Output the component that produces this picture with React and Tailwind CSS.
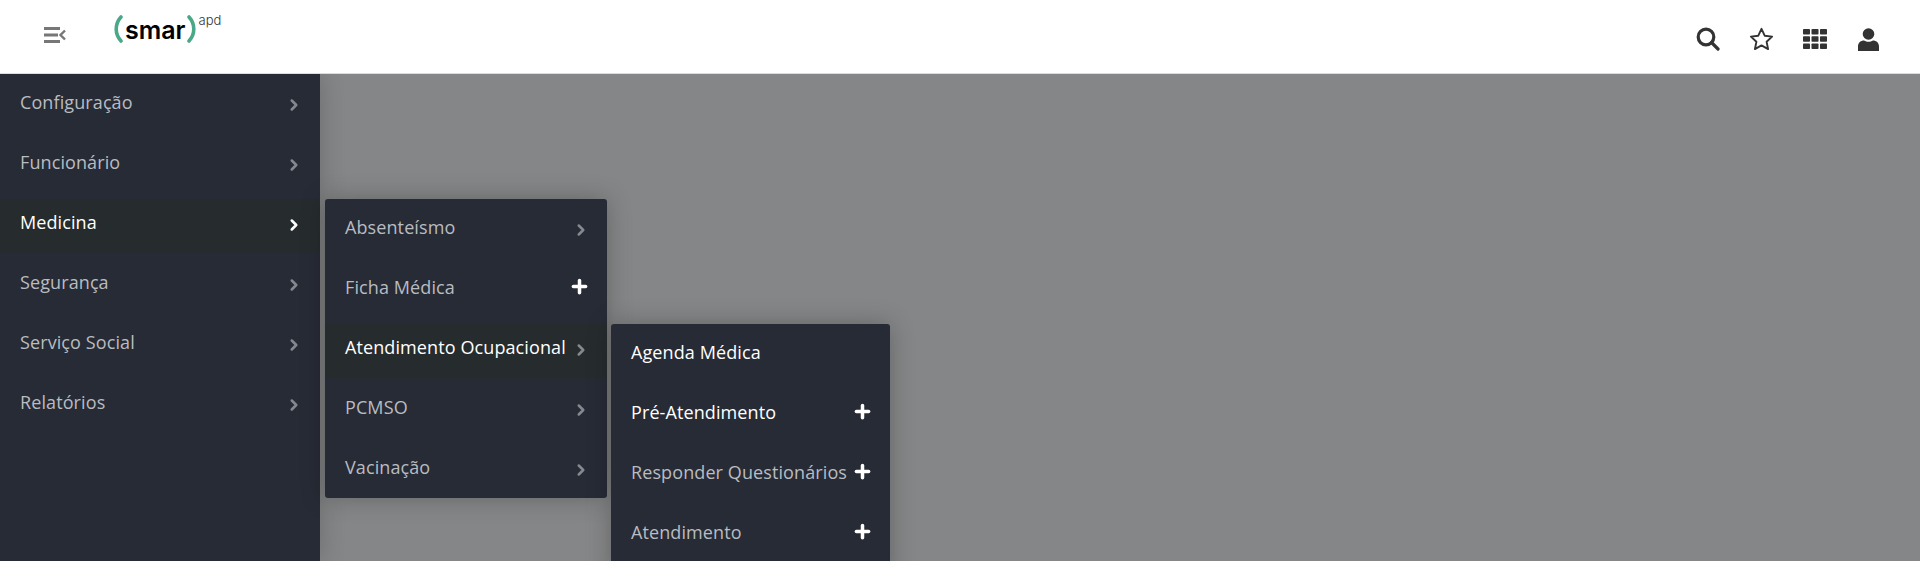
import React from 'react';
import { ChevronRight, Plus } from 'lucide-react';

const sideItems = [
    { label: 'Configuração' },
    { label: 'Funcionário' },
    { label: 'Medicina', active: true },
    { label: 'Segurança' },
    { label: 'Serviço Social' },
    { label: 'Relatórios' },
];

const subItems = [
    { label: 'Absenteísmo', icon: 'chevron' },
    { label: 'Ficha Médica', icon: 'plus' },
    { label: 'Atendimento Ocupacional', icon: 'chevron', active: true },
    { label: 'PCMSO', icon: 'chevron' },
    { label: 'Vacinação', icon: 'chevron' },
];

const subSubItems = [
    { label: 'Agenda Médica', white: true },
    { label: 'Pré-Atendimento', icon: 'plus', white: true },
    { label: 'Responder Questionários', icon: 'plus' },
    { label: 'Atendimento', icon: 'plus' },
];

function RowIcon({ type, white }) {
    if (type === 'plus') {
        return <Plus size={21} strokeWidth={4} className="text-white shrink-0 mb-[10px]" />;
    }
    if (type === 'chevron') {
        return (
            <ChevronRight
                size={18}
                strokeWidth={3.4}
                className={`shrink-0 mb-[2px] mr-[1px] ${white ? 'text-white' : 'text-[#85888e]'}`}
            />
        );
    }
    return null;
}

function MenuRow({ item, white, pr }) {
    const bright = item.active || item.white;
    return (
        <div className={`h-[54px] mb-[6px] pl-5 ${pr} flex items-center justify-between ${item.active ? 'bg-[#262c2e]' : ''}`}>
            <span className={`text-[18px] tracking-[0.1px] pb-2 whitespace-nowrap ${bright ? 'text-white' : 'text-[#b9bcc1]'}`}>{item.label}</span>
            <RowIcon type={item.icon} white={white} />
        </div>
    );
}

function Logo() {
    return (
        <div className="ml-[48px] flex items-start text-black">
            <svg width="9" height="28" viewBox="0 0 9 28" fill="none" stroke="#4aa888" strokeWidth="3.6" strokeLinecap="round" className="shrink-0">
                <path d="M7 2C0.6 9 0.6 19 7 26" />
            </svg>
            <span className="ml-[2px] mt-[1px] text-[25px] leading-[28px] font-semibold font-['Inter',sans-serif]">smar</span>
            <svg width="9" height="28" viewBox="0 0 9 28" fill="none" stroke="#4aa888" strokeWidth="3.6" strokeLinecap="round" className="ml-[1px] shrink-0">
                <path d="M2 2C8.4 9 8.4 19 2 26" />
            </svg>
            <span className="ml-[3px] -mt-[2px] text-[13px] leading-[14px] font-light text-[#333] font-['Inter',sans-serif]">apd</span>
        </div>
    );
}

function Header() {
    return (
        <header className="relative z-10 h-[74px] bg-white border-b border-[#dcdcdc] flex items-start justify-between pl-[44px] pr-[41px] pt-[15px] shrink-0">
            <div className="flex items-start">
                <svg width="22" height="16" viewBox="0 0 22 16" className="mt-[12px] shrink-0" fill="none" stroke="#777" strokeWidth="2.8">
                    <path d="M0 1.5h16M0 8h14M0 14.5h16" />
                    <path d="M21 3.5l-4.5 4.5 4.5 4.5" strokeWidth="2.4" />
                </svg>
                <Logo />
            </div>
            <div className="flex items-start mt-[12px]">
                <svg width="24" height="24" viewBox="0 0 24 24" fill="none" stroke="#333" strokeWidth="3.2">
                    <circle cx="10" cy="10" r="7.8" />
                    <path d="M15.5 15.5L22 22" strokeLinecap="round" />
                </svg>
                <svg width="25" height="24" viewBox="0 0 25 24" fill="none" stroke="#333" strokeWidth="1.9" strokeLinejoin="round" className="ml-[29px]">
                    <path d="M12.5 1.8l3.2 6.9 7.4.9-5.5 5.1 1.5 7.4-6.6-3.7-6.6 3.7 1.5-7.4L1.9 9.6l7.4-.9z" />
                </svg>
                <svg width="24" height="20" viewBox="0 0 24 20" fill="#333" className="ml-[29px] mt-[2px]">
                    <rect x="0" y="0" width="7" height="5.6" rx="0.8" />
                    <rect x="8.5" y="0" width="7" height="5.6" rx="0.8" />
                    <rect x="17" y="0" width="7" height="5.6" rx="0.8" />
                    <rect x="0" y="7.2" width="7" height="5.6" rx="0.8" />
                    <rect x="8.5" y="7.2" width="7" height="5.6" rx="0.8" />
                    <rect x="17" y="7.2" width="7" height="5.6" rx="0.8" />
                    <rect x="0" y="14.4" width="7" height="5.6" rx="0.8" />
                    <rect x="8.5" y="14.4" width="7" height="5.6" rx="0.8" />
                    <rect x="17" y="14.4" width="7" height="5.6" rx="0.8" />
                </svg>
                <svg width="21" height="23" viewBox="0 0 21 23" fill="#333" className="ml-[31px] mt-[1px]">
                    <circle cx="10.5" cy="6" r="5.8" />
                    <path d="M0 23v-4.5C0 14.5 3 12.5 6 12.5c1.5 1 3 1.3 4.5 1.3s3-.3 4.5-1.3c3 0 6 2 6 6V23z" />
                </svg>
            </div>
        </header>
    );
}

export default function App() {
    return (
        <div className="h-[561px] w-[1920px] overflow-hidden flex flex-col bg-[#858687] font-['Open_Sans',sans-serif]">
            <Header />
            <div className="relative flex-1 flex">
                <aside className="w-[320px] bg-[#272b35] shadow-[0_0_24px_rgba(0,0,0,0.2)] pt-[5px]">
                    {sideItems.map(item => <MenuRow key={item.label} item={{ ...item, icon: 'chevron' }} white={item.active} pr="pr-4" />)}
                </aside>

                {/* submenu */}
                <div className="absolute left-[325px] top-[125px] w-[282px] h-[299px] pt-[5px] bg-[#272b35] rounded-[3px] shadow-[0_0_24px_rgba(0,0,0,0.25)]">
                    {subItems.map(item => <MenuRow key={item.label} item={item} pr={item.icon === 'plus' ? 'pr-[17px]' : 'pr-4'} />)}
                </div>

                {/* sub submenu */}
                <div className="absolute left-[611px] top-[250px] w-[279px] h-[260px] pt-[5px] bg-[#272b35] rounded-t-[3px] shadow-[0_0_24px_rgba(0,0,0,0.25)]">
                    {subSubItems.map(item => <MenuRow key={item.label} item={item} pr="pr-[17px]" />)}
                </div>
            </div>
        </div>
    );
}
